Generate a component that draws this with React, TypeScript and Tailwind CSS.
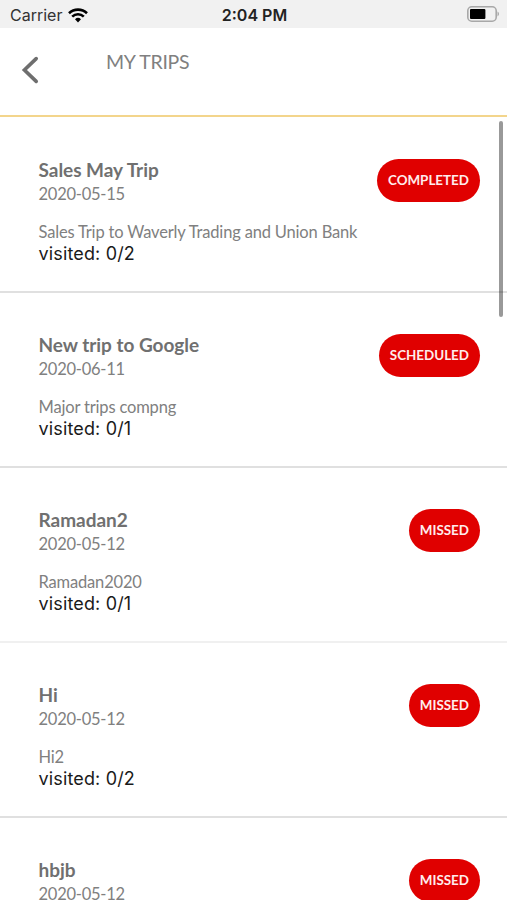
import { useState } from "react";

interface Trip {
  id: number;
  title: string;
  date: string;
  description?: string;
  visited?: string;
  status: "COMPLETED" | "SCHEDULED" | "MISSED";
  lightDivider?: boolean;
}

const TRIPS: Trip[] = [
  { id: 1, title: "Sales May Trip", date: "2020-05-15", description: "Sales Trip to Waverly Trading and Union Bank", visited: "0/2", status: "COMPLETED" },
  { id: 2, title: "New trip to Google", date: "2020-06-11", description: "Major trips compng", visited: "0/1", status: "SCHEDULED" },
  { id: 3, title: "Ramadan2", date: "2020-05-12", description: "Ramadan2020", visited: "0/1", status: "MISSED", lightDivider: true },
  { id: 4, title: "Hi", date: "2020-05-12", description: "Hi2", visited: "0/2", status: "MISSED" },
  { id: 5, title: "hbjb", date: "2020-05-12", status: "MISSED" },
];

function StatusBar() {
  return (
    <div className="grid h-7 shrink-0 grid-cols-3 items-center bg-[#f1f1f1] pt-0.5 pr-2 pl-2.5 font-['Inter',sans-serif] text-[16px] text-[#222]">
      <div className="flex items-center gap-1.5">
        <span className="text-[#333]">Carrier</span>
        <svg width="20" height="15" viewBox="0 0 20 15" fill="none" stroke="#000" strokeWidth="2.6">
          <path d="M1 5.2a13 13 0 0 1 18 0M4.2 8.6a8.3 8.3 0 0 1 11.6 0" />
          <path d="M10 14.4l-3-3.1a4.3 4.3 0 0 1 6 0z" fill="#000" stroke="none" />
        </svg>
      </div>
      <div className="text-center font-semibold">2:04 PM</div>
      <div className="-mt-0.5 -mr-px flex justify-end">
        <svg width="33" height="16" viewBox="0 0 33 16">
          <rect x="0.8" y="0.8" width="28.4" height="14.4" rx="4" fill="none" stroke="#a8a8a8" strokeWidth="1.6" />
          <rect x="3" y="3" width="15.4" height="10" rx="1" fill="#000" />
          <path d="M30.5 5.6v4.8c2-.9 2-3.9 0-4.8z" fill="#aaa" />
        </svg>
      </div>
    </div>
  );
}

function StatusBadge({ label }: { label: string }) {
  return (
    <span className="flex h-[43px] items-center rounded-full bg-[#e00000] px-[11px] text-[13.4px] font-bold text-[#ffecec]">
      {label}
    </span>
  );
}

function TripRow({ trip }: { trip: Trip }) {
  const divider = trip.lightDivider ? "border-[#f0f0f0]" : "border-[#e0e0e0]";

  return (
    <li
      className={`flex h-[175px] shrink-0 items-start justify-between border-b-2 pt-[41px] pr-[27px] pl-[38.5px] ${divider}`}
    >
      <div className="text-[16.5px] leading-[21px] tracking-[-0.15px] text-[#808080]">
        <h2 className="-mt-px text-[19px] leading-6 font-bold tracking-[-0.03px] text-[#707070]">{trip.title}</h2>
        <p className="leading-6 tracking-[-0.25px]">{trip.date}</p>
        {trip.description && <p className="mt-4 tracking-[-0.17px]">{trip.description}</p>}
        {trip.visited && (
          <p className="font-['Inter',sans-serif] text-[18px] tracking-[0.15px] text-[#1a1a1a]">
            visited: {trip.visited}
          </p>
        )}
      </div>
      <StatusBadge label={trip.status} />
    </li>
  );
}

export default function App() {
  const [trips] = useState(TRIPS);

  return (
    <div className="relative flex h-[900px] w-[507px] flex-col overflow-hidden bg-white font-['Lato',sans-serif]">
      <StatusBar />
      <header className="flex h-[89px] shrink-0 items-start border-b-2 border-[#f3d58c] pl-[21px]">
        <button type="button" aria-label="Back" className="mt-[28px]">
          <svg width="18" height="28" viewBox="0 0 18 28" fill="none" stroke="#6e6e6e" strokeWidth="3.6" strokeLinecap="round">
            <path d="M15.2 2.6L3.4 14l11.8 11.4" />
          </svg>
        </button>
        <h1 className="mt-[20px] ml-[67px] text-[19.5px] leading-7 tracking-[-0.25px] text-[#808080]">MY TRIPS</h1>
      </header>
      <ul className="flex flex-col pt-px">
        {trips.map((trip) => (
          <TripRow key={trip.id} trip={trip} />
        ))}
      </ul>
      {/* scroll indicator */}
      <div className="absolute top-[121px] right-[4px] h-[196px] w-[4px] rounded-full bg-black/40" />
    </div>
  );
}
